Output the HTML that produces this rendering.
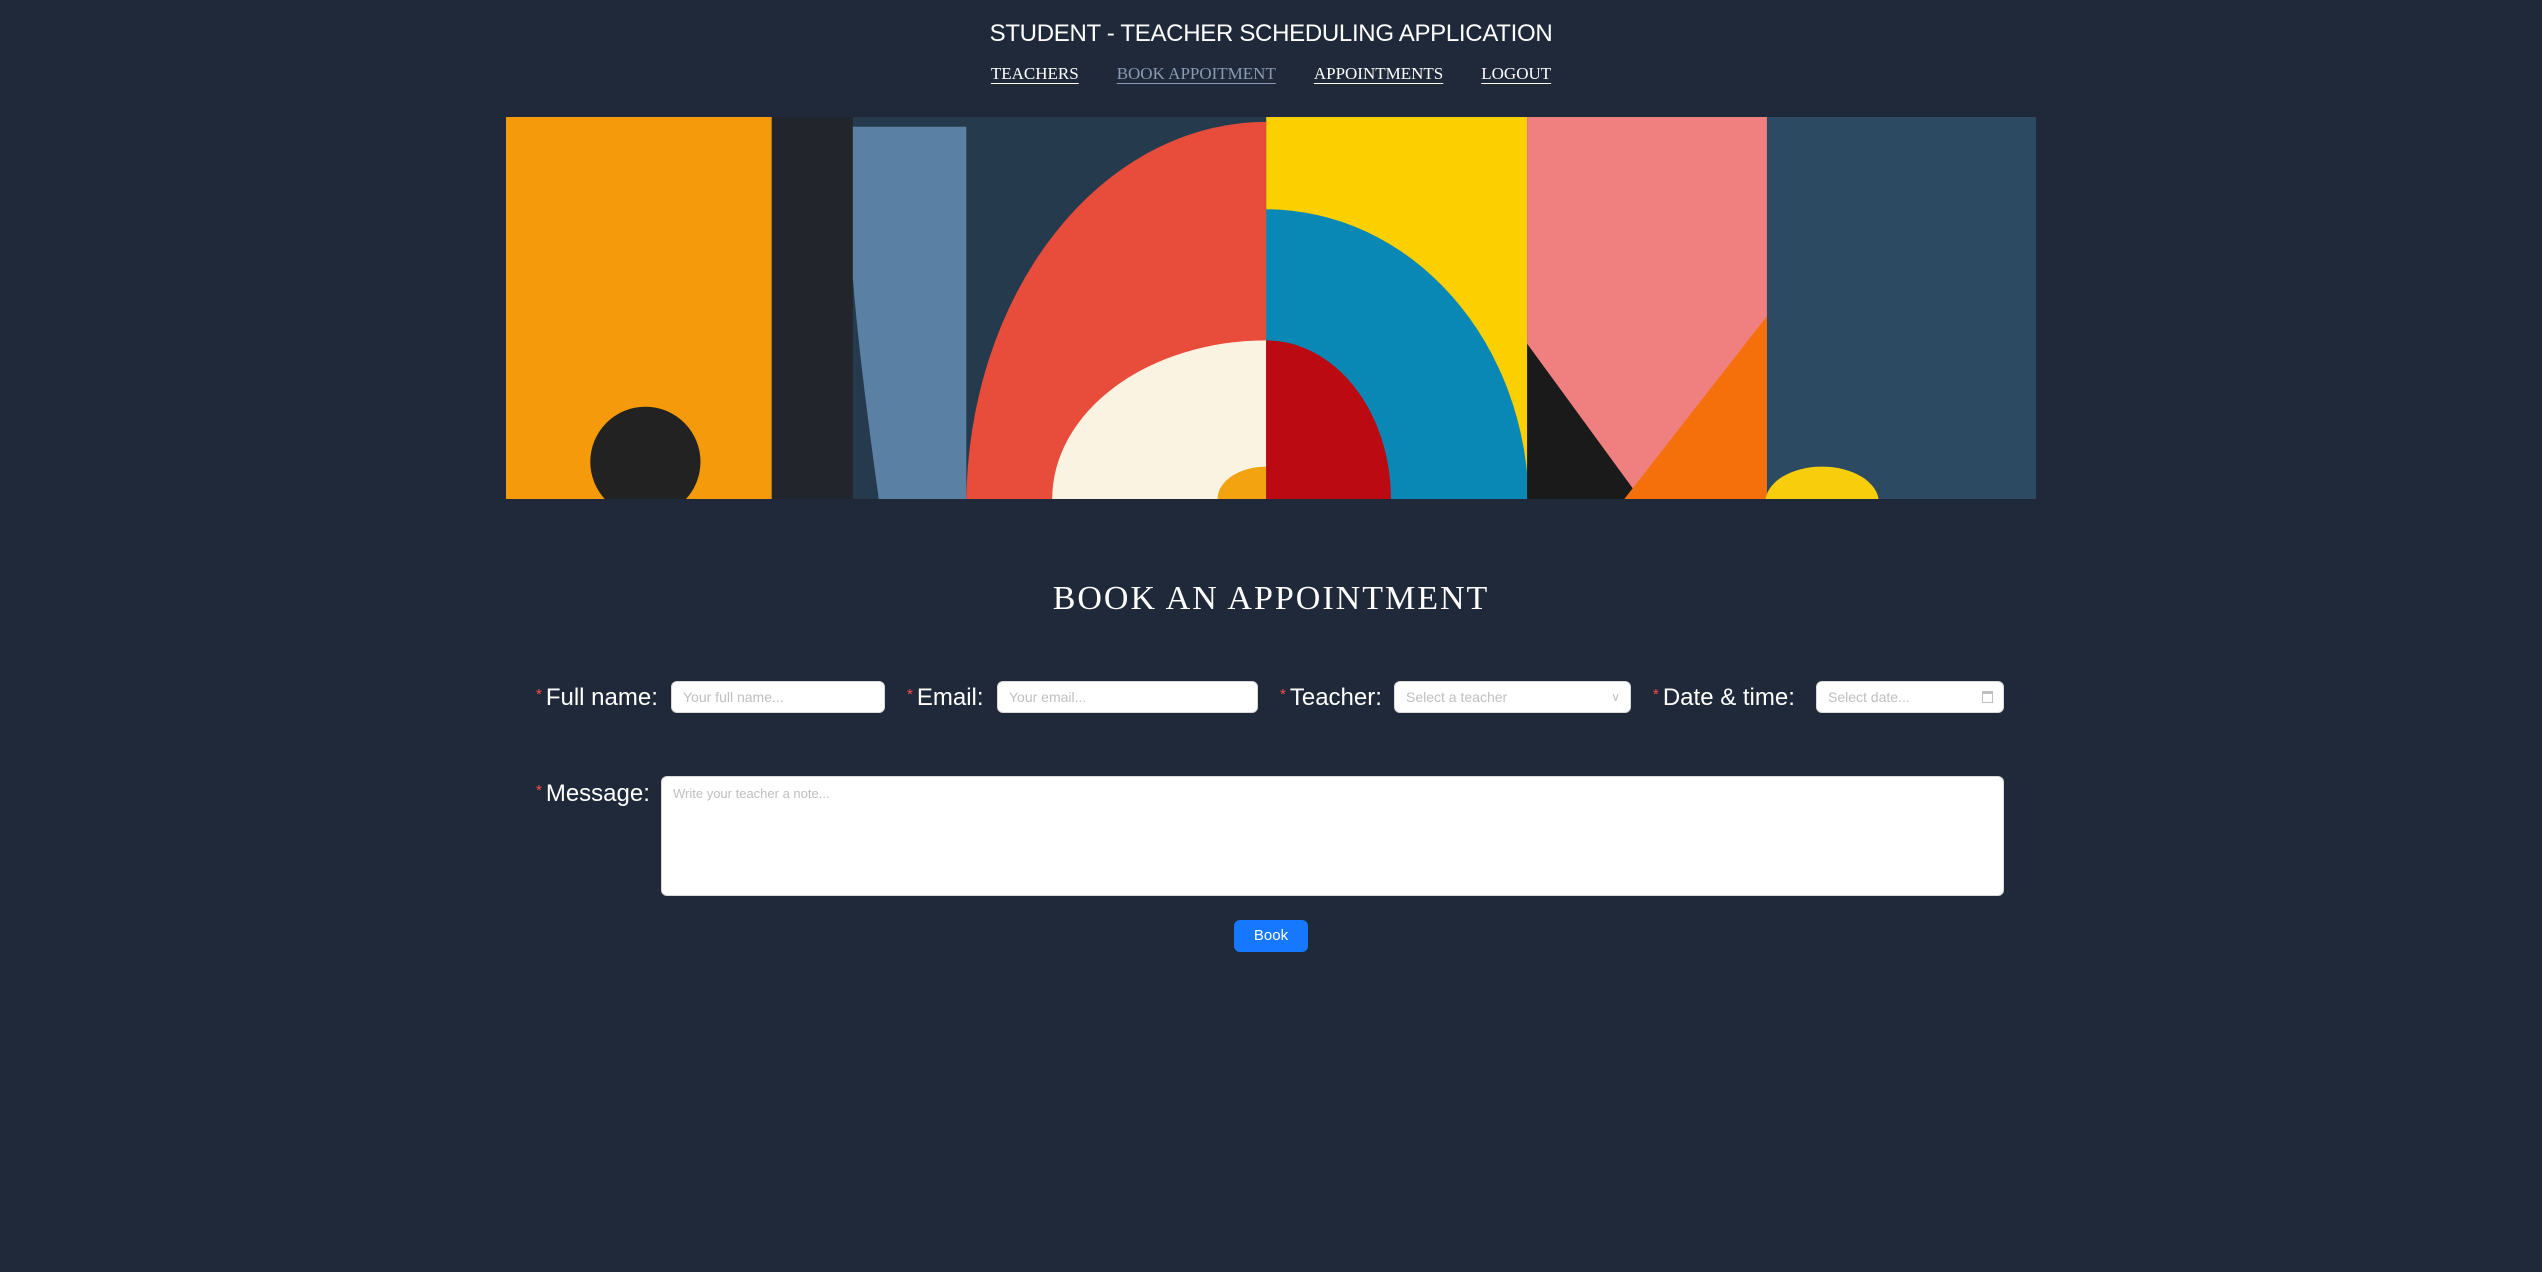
<!DOCTYPE html>
<html><head><meta charset="utf-8"><style>
*{margin:0;padding:0;box-sizing:border-box}
body{width:2542px;height:1272px;background:#1f2939;font-family:"Liberation Sans",sans-serif;color:#fff;position:relative;overflow:hidden}
.abs{position:absolute}
h1{position:absolute;top:20px;left:0;width:2542px;text-align:center;font-size:24px;font-weight:normal;letter-spacing:-0.3px;font-family:"Liberation Sans",sans-serif}
.nav{position:absolute;top:64px;left:0;width:2542px;text-align:center;font-size:17px;font-family:"Liberation Serif",serif}
.nav a{color:#fff;text-decoration:underline;margin:0 19px;text-underline-offset:4px}
.nav a.dim{color:#8a9bb3}
h2{position:absolute;top:580px;left:0;width:2542px;text-align:center;font-size:34px;font-weight:normal;letter-spacing:2px;font-family:"Liberation Serif",serif}
.lbl{position:absolute;font-size:24px;white-space:nowrap}
.lbl b{color:#ff4d4f;font-weight:normal;font-size:15px;vertical-align:6px;margin-right:4px}
.inp{position:absolute;background:#fff;border-radius:6px;border:1px solid #d9d9d9;color:#bfbfbf;font-size:14px;padding:0 11px;line-height:30px}
.btn{position:absolute;left:1234px;top:920px;width:74px;height:32px;background:#1677ff;border-radius:6px;color:#fff;font-size:15px;text-align:center;line-height:32px}
</style></head><body>
<h1>STUDENT - TEACHER SCHEDULING APPLICATION</h1>
<div class="nav"><a>TEACHERS</a><a class="dim">BOOK APPOITMENT</a><a>APPOINTMENTS</a><a>LOGOUT</a></div>
<svg class="abs" style="left:506px;top:117px" width="1530" height="382" viewBox="0 0 944 236" preserveAspectRatio="none">
<defs><clipPath id="L"><rect x="284" y="0" width="185" height="236"/></clipPath><clipPath id="R"><rect x="469" y="0" width="161" height="236"/></clipPath></defs>
<rect width="944" height="236" fill="#263a4e"/>
<rect x="0" width="164" height="236" fill="#f59a0a"/>
<circle cx="86" cy="213" r="34" fill="#222"/>
<rect x="164" width="50" height="236" fill="#22252b"/>
<path d="M214 6 L284 6 L284 236 L230 236 Q218 150 214 100 Z" fill="#5a80a3"/>
<g clip-path="url(#L)"><ellipse cx="469" cy="240" rx="185" ry="237" fill="#e84c3b"/><ellipse cx="469" cy="236" rx="132" ry="98" fill="#fbf3e1"/><ellipse cx="469" cy="236" rx="30" ry="20" fill="#f2a30f"/></g>
<g clip-path="url(#R)"><rect x="469" width="161" height="236" fill="#fcd000"/><ellipse cx="469" cy="240" rx="162" ry="183" fill="#0a88b5"/><ellipse cx="469" cy="236" rx="77" ry="98" fill="#bb0a12"/></g>
<rect x="630" width="148" height="236" fill="#f08080"/>
<path d="M630 140 L700 236 L630 236 Z" fill="#1a1a1a"/>
<path d="M778 123 L690 236 L778 236 Z" fill="#f5700a"/>
<rect x="778" width="166" height="236" fill="#2d4a63"/>
<ellipse cx="812" cy="238" rx="35" ry="22" fill="#f8cd0b"/>
</svg>
<h2>BOOK AN APPOINTMENT</h2>
<div class="lbl" style="left:536px;top:684px"><b>*</b>Full name:</div>
<div class="inp" style="left:671px;top:681px;width:214px;height:32px">Your full name...</div>
<div class="lbl" style="left:907px;top:684px"><b>*</b>Email:</div>
<div class="inp" style="left:997px;top:681px;width:261px;height:32px">Your email...</div>
<div class="lbl" style="left:1280px;top:684px"><b>*</b>Teacher:</div>
<div class="inp" style="left:1394px;top:681px;width:237px;height:32px">Select a teacher<span style="position:absolute;right:10px;font-size:12px">&#8744;</span></div>
<div class="lbl" style="left:1653px;top:684px"><b>*</b>Date &amp; time:</div>
<div class="inp" style="left:1816px;top:681px;width:188px;height:32px">Select date...<span style="position:absolute;right:10px;top:9px;width:11px;height:12px;border:1px solid #bfbfbf;border-top-width:3px"></span></div>
<div class="lbl" style="left:536px;top:780px"><b>*</b>Message:</div>
<div class="inp" style="left:661px;top:776px;width:1343px;height:120px;line-height:30px;padding-top:2px;font-size:13px">Write your teacher a note...</div>
<div class="btn">Book</div>
</body></html>
